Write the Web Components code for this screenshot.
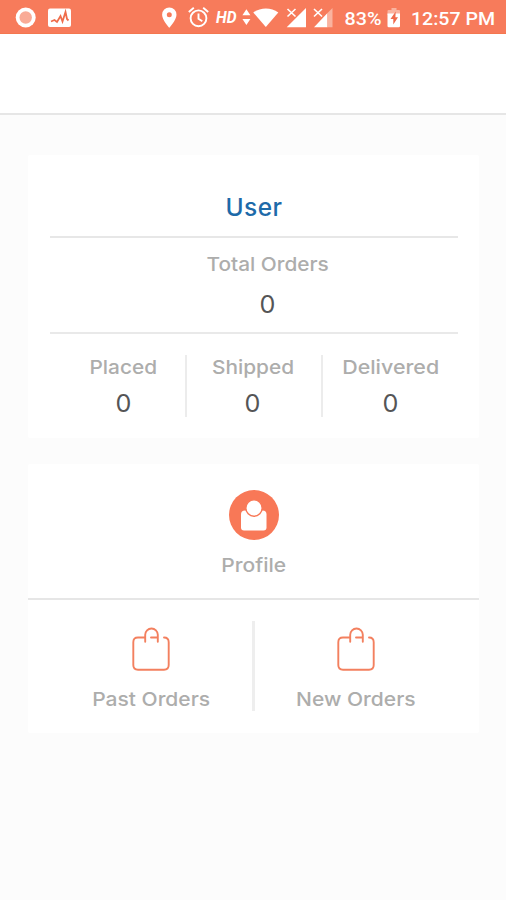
<!DOCTYPE html>
<html lang="en">
<head>
<meta charset="utf-8">
<title>Orders</title>
<style>
body{margin:0;background:#fcfcfc;font-family:Inter,"Open Sans",sans-serif;color:#adadac}
</style>
</head>
<body>
<orders-screen></orders-screen>
<script>
const define=(name,html)=>customElements.define(name,class extends HTMLElement{
  constructor(){
    super();
    const t=document.createElement('template');
    t.innerHTML=html;
    this.attachShadow({mode:'open'}).append(t.content.cloneNode(true));
  }
});

define('status-bar',`<style>
:host{display:block;height:34px;background:#f77b5b;border-bottom:1px solid #f4774f;box-sizing:border-box;color:#fff;font-family:Roboto,sans-serif;font-weight:500}
svg{display:block;width:506px;height:33px}
text{fill:#fff}
</style>
<svg viewBox="0 0 506 33" fill="#fff">
<circle cx="25.7" cy="17.5" r="10"/><circle cx="25.7" cy="17.5" r="6.2" fill="#f9ab97"/>
<rect x="48" y="8.500" width="23" height="18.500" rx="2"/>
<path d="M51 21.500l3.500-1.500 2.500 2 3.500-6 2 5.500 3-9.500 1.500 7 1.500 1.500" fill="none" stroke="#ef6d4b" stroke-width="1.800"/>
<path fill-rule="evenodd" d="M169.300 7.500a7.200 7.200 0 0 0-7.200 7.200c0 5.200 7.200 13 7.200 13s7.200-7.800 7.200-13a7.200 7.200 0 0 0-7.200-7.200zm0 4.700a2.500 2.500 0 1 1 0 5 2.500 2.500 0 0 1 0-5z"/>
<g fill="none" stroke="#fff" stroke-width="1.900"><circle cx="198.500" cy="18.300" r="7.900"/><path d="M198.500 13.500v5.200l3.800 2.500M188.800 12l5-4.200M208.200 12l-5-4.200"/></g>
<text x="216" y="23.300" font-size="17" font-style="italic" font-weight="700" textLength="20.500" lengthAdjust="spacingAndGlyphs">HD</text>
<path d="M246.400 9.200l4 6h-8zM246.400 25l4-6h-8z"/>
<path d="M253.300 12.500c7-5.500 18-5.500 25 0L265.800 27z"/>
<path d="M306 8v19.300h-19.300l6-6 3-3zM327.500 13v14.300H314z"/>
<path d="M332.500 8v19.300h-5V13z" fill="#fab39f"/>
<path d="M287.500 9l8 7.500M295.500 9l-8 7.500M314 9l8 7.500M322 9l-8 7.500" fill="none" stroke="#fff" stroke-width="1.600"/>
<text x="344.500" y="24.700" font-size="19" textLength="37" lengthAdjust="spacingAndGlyphs">83%</text>
<path d="M391.500 8h5v2h2.500q1 0 1 1v4h-12.500v-4q0-1 1-1h3z" fill="#fab39f"/>
<path d="M387.500 13.500H400V26q0 1.300-1.300 1.300h-9.900q-1.300 0-1.300-1.300z"/>
<path d="M395.700 11.500l-5.200 7.500h2.800v5.500l4.700-7.300h-2.600z" fill="#f0694a"/>
<text x="411" y="24.700" font-size="19" textLength="84" lengthAdjust="spacingAndGlyphs">12:57 PM</text>
</svg>`);

define('title-bar',`<style>
:host{display:block;height:81px;box-sizing:border-box;background:#fff;border-bottom:2px solid #e6e6e6}
</style>`);

define('white-card',`<style>
:host{display:flex;flex-direction:column;background:#fff;border-radius:2px;box-sizing:border-box}
</style><slot></slot>`);

define('stat-item',`<style>
:host{display:flex;flex-direction:column;align-items:center;font-size:19.300px;font-weight:450;line-height:24px}
.label{white-space:nowrap;transform:scaleX(var(--stretch,1.08))}
.value{margin-top:var(--gap,12px);font-size:24px;font-weight:400;line-height:26px;color:#555557;transform:scaleX(1.05)}
</style><div class="label"><slot></slot></div><div class="value"><slot name="value"></slot></div>`);

define('bag-icon',`<style>
:host{display:block;width:40px;height:44px}svg{display:block}
</style><svg width="40" height="44" viewBox="0 0 40 44" fill="none" stroke="#f3805f" stroke-width="1.900" stroke-linecap="round" stroke-linejoin="round">
<path d="M14 10.500H7q-4.700 0-4.700 4.700V38q0 4.700 4.700 4.700H33q4.700 0 4.700-4.700V15.200q0-4.700-4.700-4.700"/>
<path d="M14.200 14.700V7.800a6.300 6.300 0 0 1 12.600 0v6.900M20 10.500h6"/></svg>`);

define('profile-icon',`<style>
:host{display:block;width:50px;height:50px}svg{display:block}
</style><svg width="50" height="50" viewBox="0 0 50 50"><circle cx="25" cy="25" r="25" fill="#f87857"/>
<path d="M16 20.500h17.500q4 0 4 4V37.500q0 3-3 3H15q-3 0-3-3V24.500q0-4 4-4z" fill="#fff"/>
<circle cx="25" cy="18" r="8.200" fill="#fff" stroke="#f87857" stroke-width="1.500"/></svg>`);

define('nav-tile',`<style>
:host{display:flex;flex-direction:column;align-items:center;gap:var(--gap,16px);font-size:19.300px;font-weight:450;line-height:24px}
.label{white-space:nowrap;transform:scaleX(var(--stretch,1.09))}
</style><slot name="icon"></slot><div class="label"><slot></slot></div>`);

define('orders-screen',`<style>
:host{display:block;min-height:900px}
main{display:flex;flex-direction:column;gap:26px;padding:40px 27px 0 28px}
.summary{height:283px;padding:0 21px 0 22px}
.name{height:83px;box-sizing:border-box;padding-top:37px;text-align:center;font-size:24.500px;line-height:30px;letter-spacing:.5px;font-weight:500;color:#1d6aa9;border-bottom:2px solid #e7e7e7}
.total{height:96px;box-sizing:border-box;padding:14px 0 0 27px;border-bottom:2px solid #e9e9e9;--gap:16px}
.stats{display:grid;grid-template-columns:123px 136px 137px;padding:21px 0 0 12px;height:62px}
.stats stat-item+stat-item{border-left:2px solid #ececec}
.stats .mid{padding-right:2px}
.wide{--stretch:1.11}
.actions{height:269px}
.profile{height:136px;box-sizing:border-box;padding-top:26px;border-bottom:2px solid #e6e6e6;--gap:13px}
.orders{display:grid;grid-template-columns:1fr 3px 1fr;padding:21px 22px 0;height:90px}
.rule{background:#eee}
.orders nav-tile{padding-top:6px}
</style>
<status-bar></status-bar><title-bar></title-bar>
<main>
<white-card class="summary">
<div class="name">User</div>
<stat-item class="total">Total Orders<span slot="value">0</span></stat-item>
<div class="stats">
<stat-item>Placed<span slot="value">0</span></stat-item>
<stat-item class="mid">Shipped<span slot="value">0</span></stat-item>
<stat-item class="wide">Delivered<span slot="value">0</span></stat-item>
</div>
</white-card>
<white-card class="actions">
<nav-tile class="profile"><profile-icon slot="icon"></profile-icon>Profile</nav-tile>
<div class="orders">
<nav-tile><bag-icon slot="icon"></bag-icon>Past Orders</nav-tile>
<div class="rule"></div>
<nav-tile><bag-icon slot="icon"></bag-icon>New Orders</nav-tile>
</div>
</white-card>
</main>`);
</script>
</body>
</html>
